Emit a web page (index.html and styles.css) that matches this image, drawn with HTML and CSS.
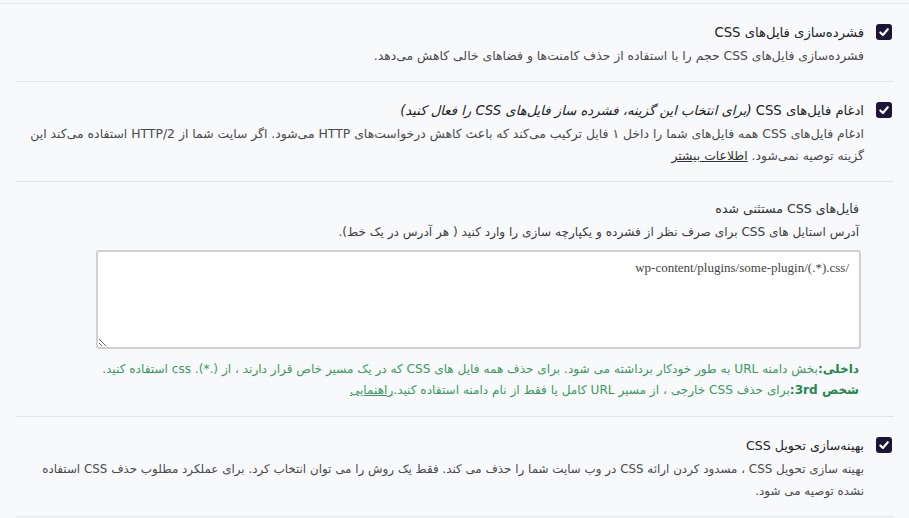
FILE: index.html
```html
<!DOCTYPE html>
<html lang="fa" dir="rtl">
<head>
<meta charset="utf-8">
<link rel="stylesheet" href="styles.css">
</head>
<body>
<div class="page">
  <div class="top-rule"></div>
  <div class="list">
    <div class="option">
      <span class="check"><svg viewBox="0 0 16 16" width="16" height="16"><path d="M4.3 8.4 L6.9 11 L11.8 5.2" fill="none" stroke="#fff" stroke-width="2.1" stroke-linecap="round" stroke-linejoin="round"/></svg></span>
      <div class="body">
        <div class="title">فشرده‌سازی فایل‌های CSS</div>
        <div class="desc">فشرده‌سازی فایل‌های CSS حجم را با استفاده از حذف کامنت‌ها و فضاهای خالی کاهش می‌دهد.</div>
      </div>
    </div>
    <div class="option">
      <span class="check"><svg viewBox="0 0 16 16" width="16" height="16"><path d="M4.3 8.4 L6.9 11 L11.8 5.2" fill="none" stroke="#fff" stroke-width="2.1" stroke-linecap="round" stroke-linejoin="round"/></svg></span>
      <div class="body">
        <div class="title">ادغام فایل‌های CSS <em class="hint">(برای انتخاب این گزینه، فشرده ساز فایل‌های CSS را فعال کنید)</em></div>
        <div class="desc">ادغام فایل‌های CSS همه فایل‌های شما را داخل ۱ فایل ترکیب می‌کند که باعث کاهش درخواست‌های HTTP می‌شود. اگر سایت شما از HTTP/2 استفاده می‌کند این گزینه توصیه نمی‌شود. <a class="more" href="#">اطلاعات بیشتر</a></div>
      </div>
    </div>
    <div class="sub">
      <div class="sub-title">فایل‌های CSS مستثنی شده</div>
      <div class="sub-desc">آدرس استایل های CSS برای صرف نظر از فشرده و یکپارچه سازی را وارد کنید ( هر آدرس در یک خط).</div>
      <textarea class="excl" dir="rtl">/wp-content/plugins/some-plugin/(.*).css</textarea>
      <div class="notes">
        <div><b>داخلی:</b>بخش دامنه URL به طور خودکار برداشته می شود. برای حذف همه فایل های CSS که در یک مسیر خاص قرار دارند ، از (.*). css استفاده کنید.</div>
        <div><b>شخص 3rd:</b>برای حذف CSS خارجی ، از مسیر URL کامل یا فقط از نام دامنه استفاده کنید.<a class="guide" href="#">راهنمایی</a></div>
      </div>
    </div>
    <div class="option">
      <span class="check"><svg viewBox="0 0 16 16" width="16" height="16"><path d="M4.3 8.4 L6.9 11 L11.8 5.2" fill="none" stroke="#fff" stroke-width="2.1" stroke-linecap="round" stroke-linejoin="round"/></svg></span>
      <div class="body">
        <div class="title compact">بهینه‌سازی تحویل CSS</div>
        <div class="desc compact">بهینه سازی تحویل CSS ، مسدود کردن ارائه CSS در وب سایت شما را حذف می کند. فقط یک روش را می توان انتخاب کرد. برای عملکرد مطلوب حذف CSS استفاده نشده توصیه می شود.</div>
      </div>
    </div>
  </div>
</div>
</body>
</html>
```
FILE: styles.css
```css
html, body {
  margin: 0;
  padding: 0;
  background: #f8f9fb;
}
body {
  font-family: "DejaVu Sans", "Noto Sans", sans-serif;
  color: #3c3c3c;
  width: 909px;
  height: 518px;
  overflow: hidden;
}
.page {
  padding-top: 3px;
}
.top-rule {
  border-top: 1px solid #e4e6ea;
}
.list {
  padding: 0 15px 0 16px;
}
.option {
  display: flex;
  align-items: flex-start;
  gap: 12px;
  padding: 18px 2px 14px 0;
  border-bottom: 1px solid #e2e4e8;
}
.check {
  flex: none;
  width: 16px;
  height: 16px;
  margin-top: 2px;
  border-radius: 3px;
  background: #1d1538;
  display: flex;
}
.body {
  flex: 1;
}
.title {
  font-size: 13.2px;
  line-height: 22px;
  color: #222;
}
.title.compact {
  font-size: 12.6px;
}
.hint {
  font-style: italic;
}
.desc {
  font-size: 12.4px;
  line-height: 22px;
  color: #4a4a4a;
  margin-top: 1px;
}
.desc.compact {
  font-size: 11.9px;
}
.more {
  color: #333;
  text-decoration: underline;
}
.sub {
  padding: 16px 35px 15px 0;
  border-bottom: 1px solid #e2e4e8;
}
.sub-title {
  font-size: 12.6px;
  line-height: 22px;
  color: #333;
}
.sub-desc {
  font-size: 12.1px;
  line-height: 22px;
  color: #3c3c3c;
  margin-top: 1px;
}
.excl {
  display: block;
  box-sizing: border-box;
  width: 765px;
  height: 99px;
  margin: 7px -2px 0 0;
  padding: 8px 10px;
  border: 2px solid #cfd0d2;
  border-radius: 3px;
  background: #fff;
  font-family: "Liberation Serif", serif;
  font-size: 13px;
  color: #444;
}
.notes {
  margin-top: 10px;
  font-size: 12.1px;
  line-height: 21px;
  color: #3a9a62;
}
.notes b {
  color: #25874f;
}
.guide {
  color: #3a9a62;
  text-decoration: underline;
}
```
